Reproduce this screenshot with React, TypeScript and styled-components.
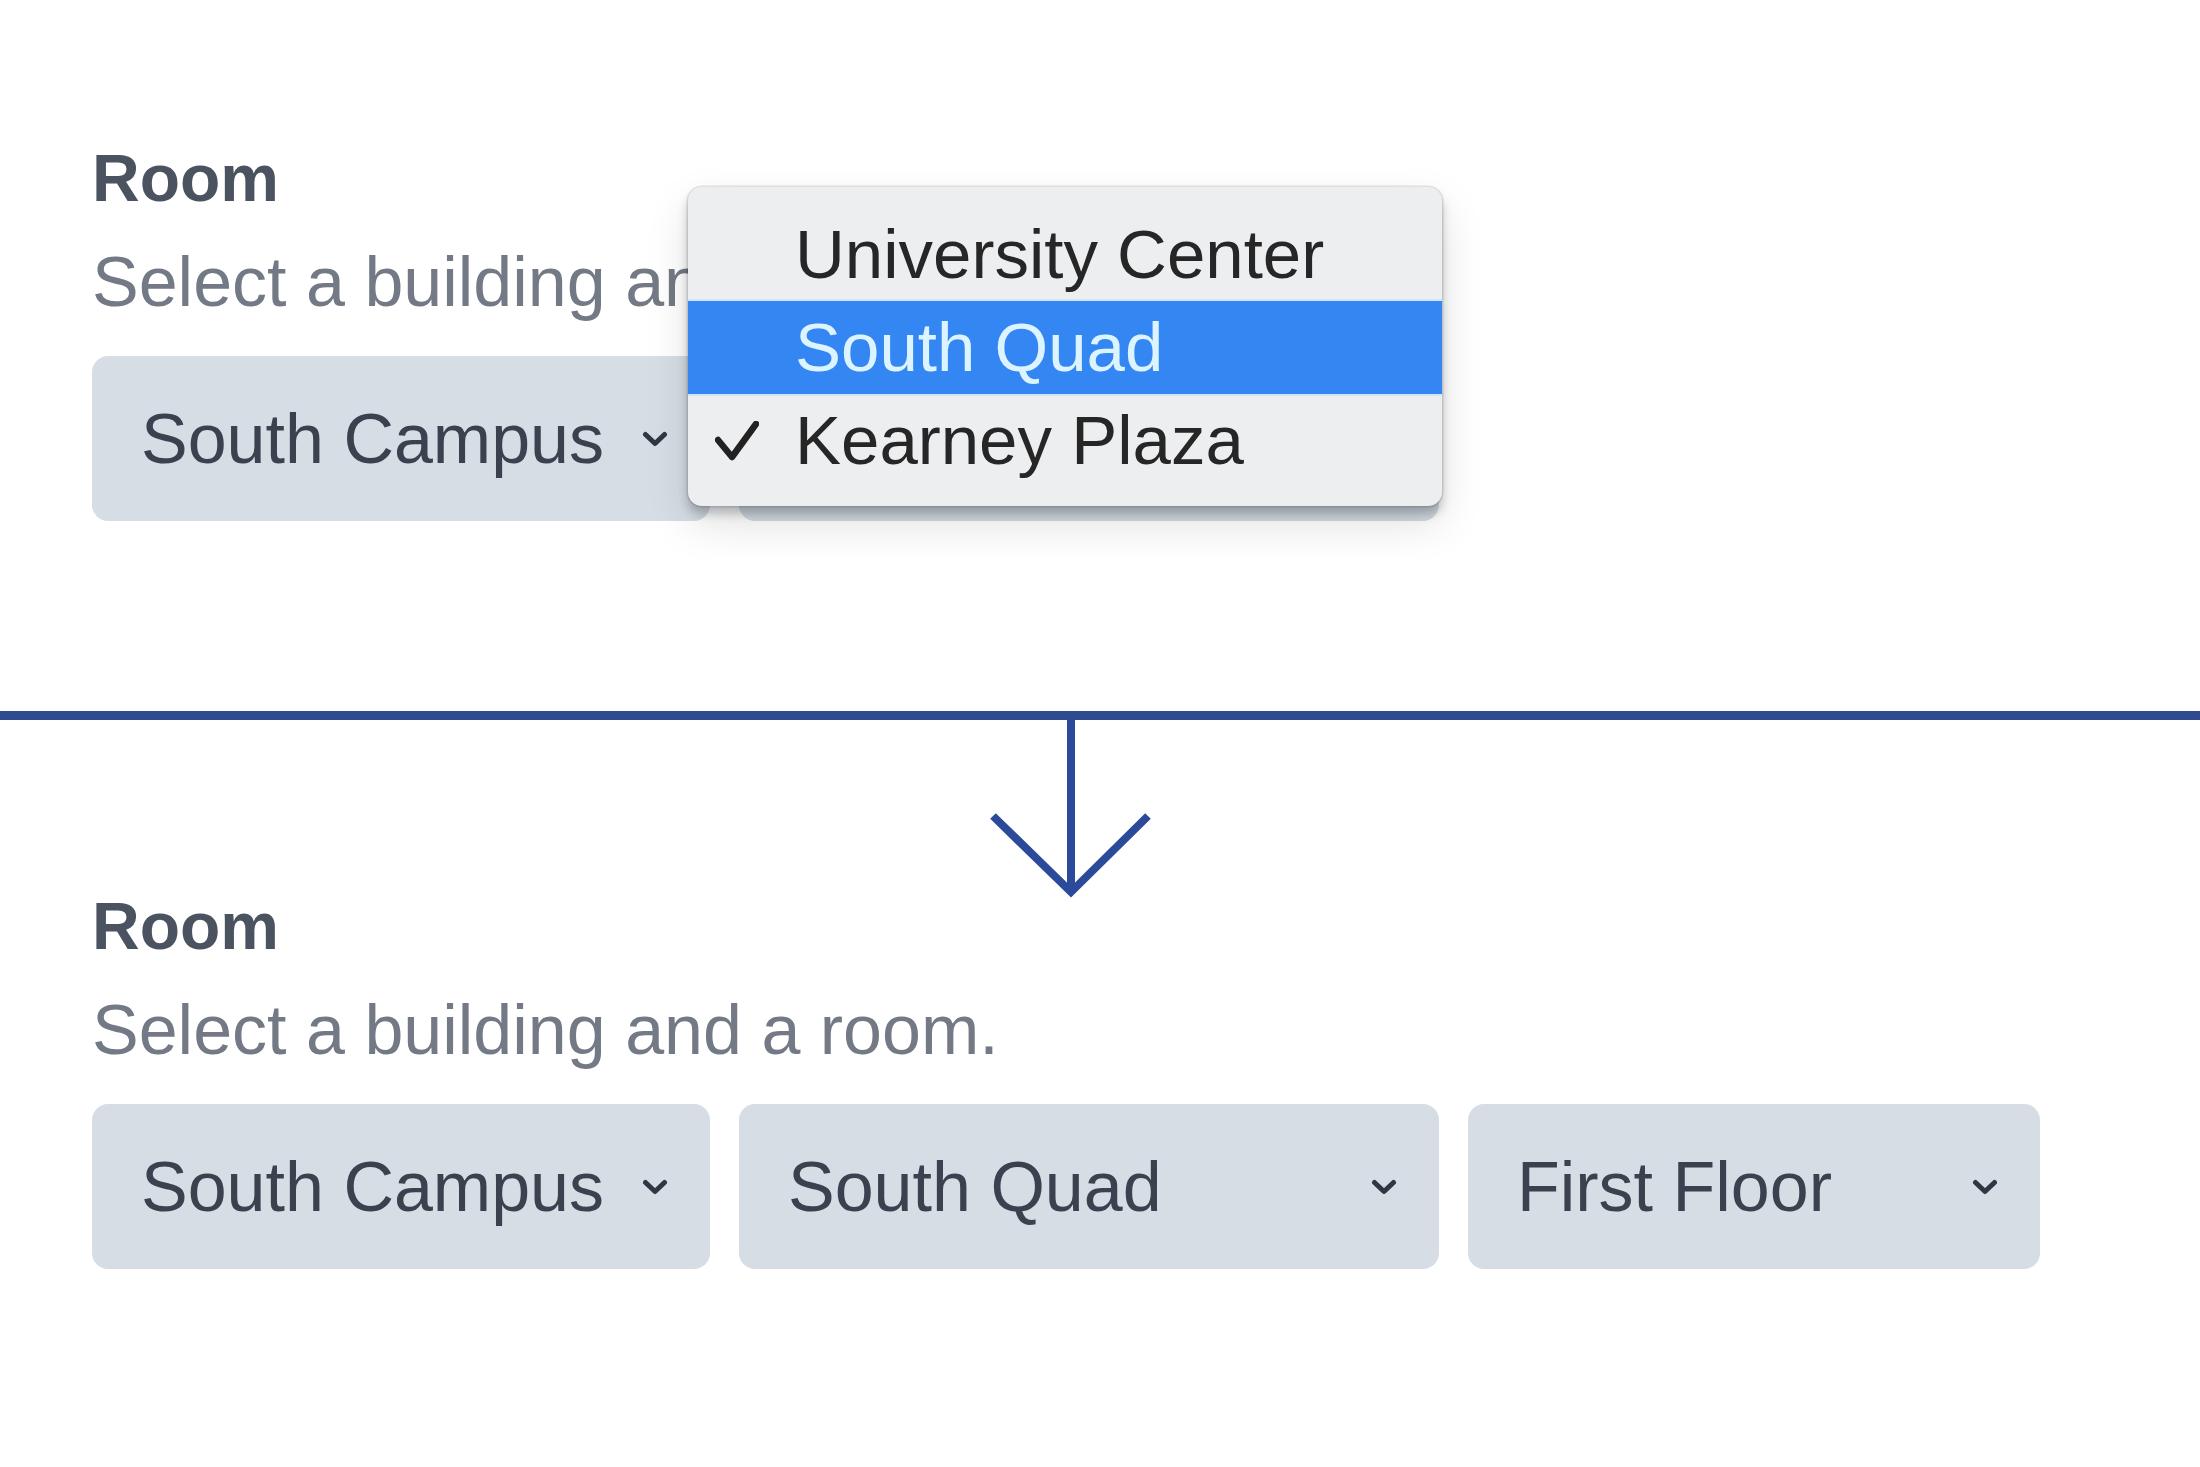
import * as React from 'react';
import styled, { createGlobalStyle } from 'styled-components';

/*!
 * Styles
 */

const GlobalStyle = createGlobalStyle`
  html, body {
    margin: 0;
    padding: 0;
    background: #ffffff;
  }

  body {
    font-family: "Liberation Sans", Arial, sans-serif;
    -webkit-font-smoothing: antialiased;
  }
`;

const Page = styled.div`
  width: 2200px;
  min-height: 1467px;
  padding-top: 138px;
  box-sizing: border-box;
  overflow: hidden;
`;

const Field = styled.section`
  padding-left: 92px;
`;

const Label = styled.div`
  font-size: 66px;
  line-height: 80px;
  font-weight: 700;
  color: #4b5361;
`;

const Description = styled.div<{ $clip?: number }>`
  margin-top: 24px;
  font-size: 70px;
  line-height: 80px;
  color: #737a85;
  white-space: nowrap;
  overflow: hidden;
  width: ${(p) => (p.$clip ? `${p.$clip}px` : 'auto')};
`;

const SelectRow = styled.div`
  position: relative;
  display: flex;
  gap: 29px;
  margin-top: 34px;
`;

const Select = styled.div<{ $width: number }>`
  display: flex;
  align-items: center;
  justify-content: space-between;
  width: ${(p) => p.$width}px;
  height: 165px;
  padding: 0 42px 0 49px;
  box-sizing: border-box;
  border-radius: 16px;
  background: #d6dde5;
  color: #3a424f;
  font-size: 70px;
  white-space: nowrap;
`;

const Chevron = styled.svg`
  flex: none;
  width: 26px;
  height: 16px;
`;

const Menu = styled.ul`
  position: absolute;
  left: 596px;
  top: -169px;
  width: 754px;
  margin: 0;
  padding: 21px 0 19px;
  box-sizing: border-box;
  list-style: none;
  border-radius: 14px;
  background: #eceef0;
  box-shadow:
    0 0 0 1.5px rgba(0, 0, 0, 0.1),
    0 8px 10px rgba(40, 50, 60, 0.28),
    0 18px 44px rgba(0, 0, 0, 0.12);
  overflow: hidden;
`;

const MenuItem = styled.li<{ $active?: boolean }>`
  position: relative;
  display: flex;
  align-items: center;
  height: 93px;
  padding-left: 107px;
  font-size: 69px;
  color: ${(p) => (p.$active ? '#dcf4ff' : '#262626')};
  background: ${(p) => (p.$active ? '#3486f3' : 'transparent')};
  box-shadow: ${(p) => (p.$active ? '0 -2px 0 #cfe6fb, 0 2px 0 #cfe6fb' : 'none')};
  white-space: nowrap;
`;

const Check = styled.svg`
  position: absolute;
  left: 27px;
  top: 27px;
  width: 44px;
  height: 40px;
`;

const Divider = styled.div`
  margin-top: 190px;
  height: 9px;
  background: #2f4a8e;
`;

const ArrowWrap = styled.div`
  height: 166px;
  padding-left: 985px;
`;

const Arrow = styled.svg`
  display: block;
  width: 172px;
  height: 180px;
  overflow: visible;
`;

/*!
 * Parts
 */

const ChevronIcon = () => (
  <Chevron viewBox="0 0 26 16">
    <path d="M3.5 3.5 L13 12.5 L22.5 3.5" fill="none" stroke="#2f3744" strokeWidth="5" strokeLinecap="round" strokeLinejoin="round" />
  </Chevron>
);

const SelectBox = ({ width, value }: { width: number; value?: string }) => (
  <Select $width={width}>
    <span>{value}</span>
    <ChevronIcon />
  </Select>
);

const buildings = [
  { name: 'University Center' },
  { name: 'South Quad', active: true },
  { name: 'Kearney Plaza', checked: true },
];

/*!
 * Expo
 */

export default function App() {
  return (
    <Page>
      <GlobalStyle />

      <Field>
        <Label>Room</Label>
        <Description $clip={596}>Select a building and a room.</Description>
        <SelectRow>
          <SelectBox width={618} value="South Campus" />
          <SelectBox width={700} />
          <Menu>
            {buildings.map((b) => (
              <MenuItem key={b.name} $active={b.active}>
                {b.checked && (
                  <Check viewBox="0 0 44 40">
                    <path d="M3 19 L17 36 L41 3" fill="none" stroke="#222222" strokeWidth="6.5" strokeLinecap="round" strokeLinejoin="round" />
                  </Check>
                )}
                {b.name}
              </MenuItem>
            ))}
          </Menu>
        </SelectRow>
      </Field>

      <Divider />
      <ArrowWrap>
        <Arrow viewBox="0 0 172 180">
          <path d="M86 0 L86 172" fill="none" stroke="#2c4a9a" strokeWidth="8" />
          <path d="M8 96 L86 172 L163 96" fill="none" stroke="#2c4a9a" strokeWidth="8" strokeLinejoin="miter" />
        </Arrow>
      </ArrowWrap>

      <Field>
        <Label>Room</Label>
        <Description>Select a building and a room.</Description>
        <SelectRow>
          <SelectBox width={618} value="South Campus" />
          <SelectBox width={700} value="South Quad" />
          <SelectBox width={572} value="First Floor" />
        </SelectRow>
      </Field>
    </Page>
  );
}
